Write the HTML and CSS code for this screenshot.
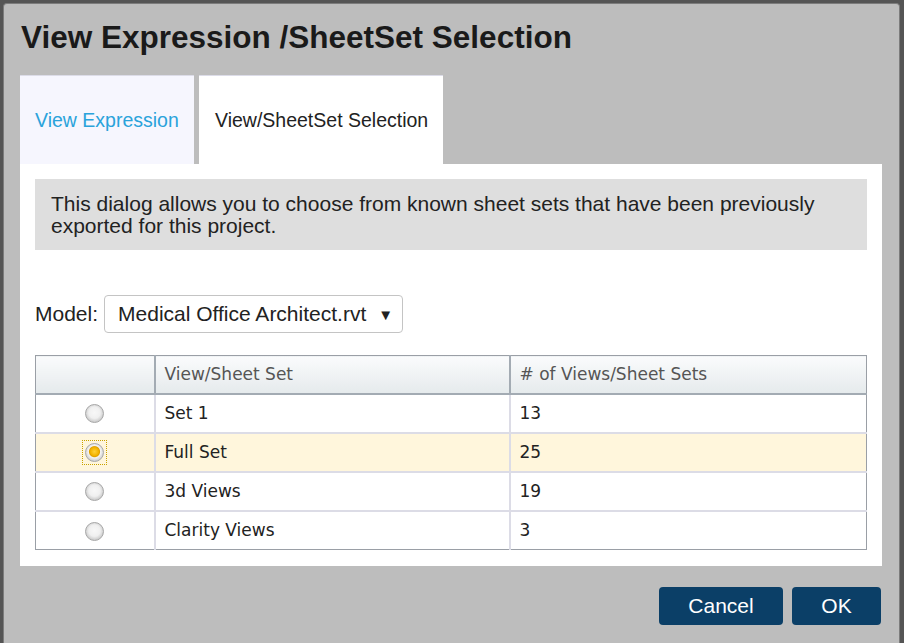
FILE: index.html
```html
<!DOCTYPE html>
<html lang="en">
<head>
  <meta charset="UTF-8">
  <title>View Expression /SheetSet Selection</title>
  <link rel="stylesheet" href="styles.css">
</head>
<body>
  <div class="dialog">
    <h1 class="dialog-title">View Expression /SheetSet Selection</h1>

    <!-- Onglets -->
    <div class="tabs">
      <div class="tab tab-inactive">View Expression</div>
      <div class="tab tab-active">View/SheetSet Selection</div>
    </div>

    <div class="panel">
      <div class="info">
        This dialog allows you to choose from known sheet sets that have been previously exported for this project.
      </div>

      <div class="model-row">
        <label class="model-label">Model:</label>
        <div class="model-select">
          <span>Medical Office Architect.rvt</span>
          <span class="arrow">&#9660;</span>
        </div>
      </div>

      <table class="sets">
        <thead>
          <tr>
            <th class="col-radio"></th>
            <th class="col-name">View/Sheet Set</th>
            <th>&#35; of Views/Sheet Sets</th>
          </tr>
        </thead>
        <tbody>
          <tr>
            <td class="col-radio"><span class="radio"></span></td>
            <td>Set 1</td>
            <td>13</td>
          </tr>
          <tr class="selected">
            <td class="col-radio"><span class="focus"><span class="radio checked"></span></span></td>
            <td>Full Set</td>
            <td>25</td>
          </tr>
          <tr>
            <td class="col-radio"><span class="radio"></span></td>
            <td>3d Views</td>
            <td>19</td>
          </tr>
          <tr>
            <td class="col-radio"><span class="radio"></span></td>
            <td>Clarity Views</td>
            <td>3</td>
          </tr>
        </tbody>
      </table>
    </div>

    <div class="buttons">
      <button class="btn btn-cancel">Cancel</button>
      <button class="btn btn-ok">OK</button>
    </div>
  </div>
</body>
</html>
```

FILE: styles.css
```css
* {
  margin: 0;
  padding: 0;
  box-sizing: border-box;
}

body {
  font-family: "Liberation Sans", Arial, sans-serif;
  background: #555;
  height: 643px;
  overflow: hidden;
  padding: 3px 4px 0 3px;
}

/* Fenêtre */
.dialog {
  background: #bdbdbd;
  border: 1px solid #7c7c7c;
  border-bottom: none;
  border-radius: 4px 4px 0 0;
  height: 640px;
  padding: 15px 17px 0 16px;
}

.dialog-title {
  font-size: 31.5px;
  font-weight: bold;
  color: #1a1a1a;
  line-height: 36px;
  padding-left: 1px;
  margin-bottom: 20px;
  white-space: nowrap;
}

/* Onglets */
.tabs {
  display: flex;
  gap: 5px;
}

.tab {
  height: 89px;
  display: flex;
  align-items: center;
  font-size: 19.5px;
  padding: 0 15px;
  white-space: nowrap;
  border-top: 1px solid #dcdce8;
}

.tab-inactive {
  width: 174px;
  background: #f6f6fe;
  color: #2aa3db;
}

.tab-active {
  width: 244px;
  background: #fff;
  color: #222;
  padding-left: 16px;
}

/* Contenu */
.panel {
  background: #fff;
  padding: 15px 15px 16px 15px;
}

.info {
  background: #dedede;
  color: #222;
  font-size: 21px;
  line-height: 22px;
  padding: 14px 16px 13px;
}

.model-row {
  display: flex;
  align-items: center;
  margin-top: 45px;
  gap: 6px;
  font-size: 21px;
  color: #222;
}

.model-select {
  width: 299px;
  height: 38px;
  border: 1px solid #c4c4c4;
  border-radius: 4px;
  display: flex;
  align-items: center;
  justify-content: space-between;
  padding: 0 9px 0 13px;
}

.arrow {
  font-size: 15px;
}

/* Tableau */
.sets {
  margin-top: 22px;
  width: 100%;
  border-collapse: collapse;
  border: 1px solid #9a9fa6;
  font-family: "DejaVu Sans", Verdana, sans-serif;
  font-size: 17px;
  color: #222;
}

.sets th {
  height: 38px;
  text-align: left;
  font-weight: normal;
  color: #555;
  padding: 0 9px;
  background: linear-gradient(#fafbfc, #e5eaec);
  border-left: 2px solid #a3abb3;
  border-bottom: 2px solid #a3abb3;
}

.sets th:first-child {
  border-left: none;
}

.sets td {
  height: 39px;
  padding: 0 9px;
  border-left: 2px solid #dcdce6;
  border-bottom: 2px solid #dcdce6;
}

.sets td:first-child {
  border-left: none;
}

.sets tr:last-child td {
  border-bottom: none;
}

.col-radio {
  width: 119px;
  text-align: center;
}

.sets td.col-radio {
  text-align: center;
  padding: 0;
}

.col-name {
  width: 355px;
}

.selected td {
  background: #fff6dc;
}

.radio {
  display: inline-block;
  vertical-align: middle;
  width: 19px;
  height: 19px;
  border-radius: 50%;
  border: 1px solid #a8a8a8;
  background: radial-gradient(circle at 50% 45%, #f8f8f8 0, #f0f0f0 45%, #cfcfcf 70%, #e6e6e6 100%);
}

.radio.checked {
  background: radial-gradient(circle at 50% 45%, #ffd23a 0, #f3b300 32%, #e0a000 40%, #f4f4f4 48%, #d2d2d2 72%, #e8e8e8 100%);
}

.focus {
  display: inline-block;
  padding: 2px;
  border: 1px dotted #c9a200;
  line-height: 0;
}

/* Boutons */
.buttons {
  display: flex;
  justify-content: flex-end;
  gap: 9px;
  margin-top: 21px;
  padding-right: 1px;
}

.btn {
  height: 38px;
  background: #0b3f67;
  color: #fff;
  border: none;
  border-radius: 4px;
  font-family: "Liberation Sans", Arial, sans-serif;
  font-size: 21px;
}

.btn-cancel {
  width: 124px;
}

.btn-ok {
  width: 89px;
}
```
